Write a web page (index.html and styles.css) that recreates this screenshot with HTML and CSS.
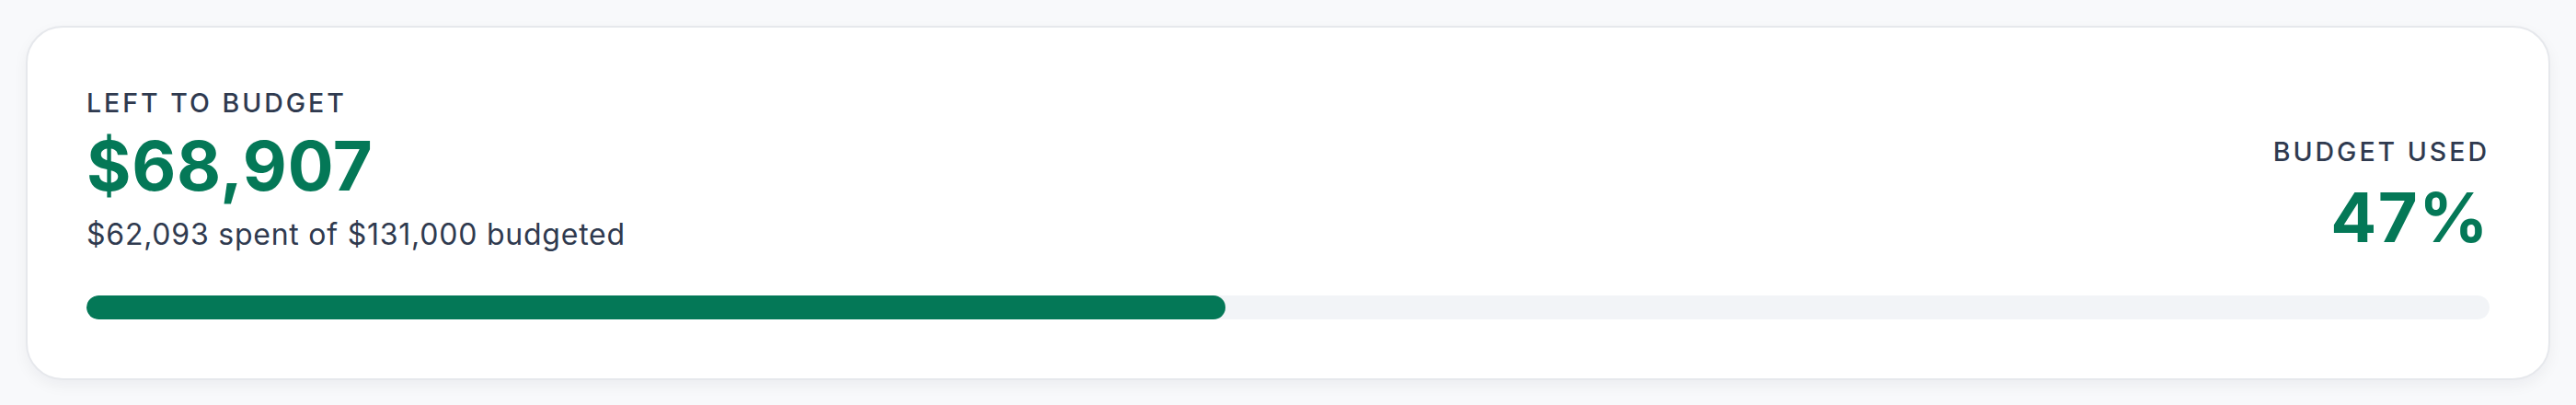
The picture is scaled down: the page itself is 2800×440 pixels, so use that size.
FILE: index.html
```html
<!DOCTYPE html>
<html lang="en">
<head>
<meta charset="utf-8">
<title>Budget summary</title>
<link rel="stylesheet" href="styles.css">
</head>
<body>
  <section class="card">
    <div class="summary">
      <div class="left">
        <div class="label">Left to budget</div>
        <div class="amount">$68,907</div>
        <div class="detail">$62,093 spent of $131,000 budgeted</div>
      </div>
      <div class="right">
        <div class="label">Budget used</div>
        <div class="amount">47%</div>
      </div>
    </div>
    <div class="track">
      <div class="fill" style="width: 47.4%"></div>
    </div>
  </section>
</body>
</html>
```
FILE: styles.css
```css
html, body {
  margin: 0;
  padding: 0;
}
body {
  background: #f8f9fb;
  padding: 28px;
  font-family: Inter, "Noto Sans", sans-serif;
  color: #334155;
}
.card {
  background: #ffffff;
  border: 2px solid #e6e8ec;
  border-radius: 40px;
  padding: 65px 64px 64px 64px;
  box-shadow: 0 6px 16px rgba(15, 23, 42, 0.05);
}
.summary {
  display: flex;
  justify-content: space-between;
  align-items: flex-end;
}
.label {
  font-size: 28.5px;
  line-height: 34px;
  font-weight: 500;
  letter-spacing: 0.105em;
  text-transform: uppercase;
  color: #2f3a4f;
}
.amount {
  font-size: 74px;
  line-height: 74px;
  font-weight: 700;
  color: #047857;
  letter-spacing: 0.01em;
}
.left .amount {
  margin-top: 14px;
}
.detail {
  margin-top: 19px;
  font-size: 32px;
  line-height: 37px;
  letter-spacing: 0.024em;
  color: #2f3a4f;
}
.right {
  text-align: right;
}
.right .amount {
  margin-top: 17px;
  letter-spacing: 0.02em;
}
.track {
  margin-top: 48px;
  height: 26px;
  border-radius: 13px;
  background: #f2f4f7;
  overflow: hidden;
}
.fill {
  height: 100%;
  background: #047857;
  border-radius: 13px;
}
```
